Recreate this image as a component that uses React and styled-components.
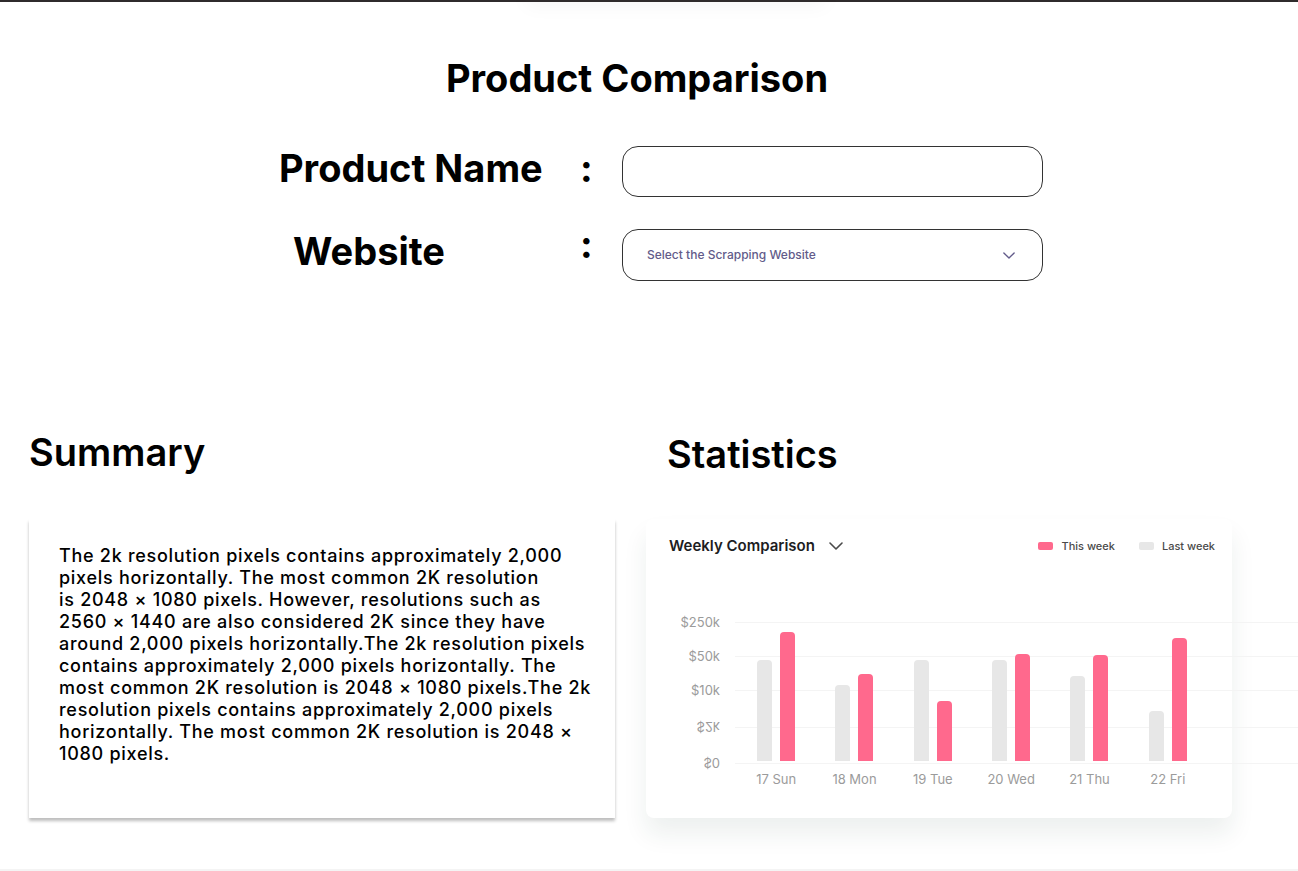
import React from "react";
import styled, { createGlobalStyle } from "styled-components";

const sans = '"Inter", "Liberation Sans", sans-serif';

const GlobalStyle = createGlobalStyle`
  *, *::before, *::after { box-sizing: border-box; }
  body { margin: 0; background: #fff; overflow-x: hidden; }
`;

const Page = styled.main`
  min-height: 100vh;
  display: flex;
  flex-direction: column;
  overflow: hidden;
  font-family: ${sans};
  color: #000;
`;

const TopBar = styled.div`
  height: 2px;
  background: #2f2b2c;
`;

const TopShade = styled.div`
  align-self: center;
  width: 300px;
  height: 20px;
  margin: -20px 0 0 53px;
  box-shadow: 0 4px 20px rgba(0, 0, 0, 0.04);
`;

const Title = styled.h1`
  margin: 53px 24px 0 0;
  font-size: 38px;
  line-height: 46px;
  font-weight: 700;
  text-align: center;
`;

const Form = styled.form`
  align-self: center;
  width: 788px;
  max-width: 100%;
  margin-top: 45px;
  padding-left: 24px;
  display: flex;
  flex-direction: column;
  gap: 32px;
`;

const Field = styled.div`
  display: grid;
  grid-template-columns: 301px 42px 1fr;
  align-items: center;
`;

const Label = styled.label`
  padding-left: ${(p) => (p.$inset ? "14px" : "0")};
  padding-bottom: 8px;
  font-size: 38px;
  line-height: 38px;
  font-weight: 700;
`;

const Colon = styled.span`
  padding-bottom: ${(p) => (p.$raised ? "22px" : "8px")};
  font-size: 38px;
  line-height: 24px;
  font-weight: 700;
`;

const TextBox = styled.input`
  width: 100%;
  height: 51px;
  padding: 0 24px;
  border: 1px solid #333;
  border-radius: 16px;
  background: #fff;
  font: 500 12px/18px ${sans};
`;

const SelectWrap = styled.div`
  display: grid;
  align-items: center;

  > * { grid-area: 1 / 1; }
  > svg { justify-self: end; margin-right: 28px; pointer-events: none; }
`;

const Select = styled.select`
  width: 100%;
  height: 52px;
  padding: 0 48px 0 24px;
  border: 1px solid #333;
  border-radius: 16px;
  background: #fff;
  appearance: none;
  color: #625b8a;
  font: 500 12px/18px ${sans};
`;

const Panels = styled.div`
  display: grid;
  grid-template-columns: 1fr 1fr;
  gap: 31px;
  margin-top: 148px;
  padding: 0 66px 0 29px;
`;

const Panel = styled.section`
  display: flex;
  flex-direction: column;
`;

const Heading = styled.h2`
  margin: 0;
  padding: ${(p) => (p.$inset ? "2px 0 0 21px" : "0 0 2px")};
  font-size: 38px;
  line-height: 46px;
  font-weight: 600;
`;

const SummaryCard = styled.div`
  flex: 1;
  margin-top: 42px;
  padding: 26px 20px 24px 30px;
  background: #fff;
  box-shadow: 0 3px 3px rgba(0, 0, 0, 0.26);
`;

const SummaryText = styled.p`
  margin: 0;
  font-size: 18px;
  line-height: 22px;
  font-weight: 500;
  letter-spacing: 0.04em;
`;

const StatsCard = styled.div`
  margin-top: 42px;
  min-height: 299px;
  padding: 16px 0 0;
  border-radius: 8px;
  background: #fff;
  box-shadow: 0 16px 24px rgba(30, 60, 50, 0.08);
`;

const CardHead = styled.div`
  display: flex;
  align-items: center;
  justify-content: space-between;
  padding: 0 17px 0 23px;
`;

const RangeButton = styled.button`
  display: flex;
  align-items: center;
  gap: 14px;
  padding: 0;
  border: 0;
  background: none;
  color: #1d1d1f;
  font: 600 15px/22px ${sans};
`;

const Legend = styled.ul`
  display: flex;
  gap: 24px;
  margin: 0;
  padding: 0;
  list-style: none;
`;

const LegendItem = styled.li`
  display: flex;
  align-items: center;
  gap: 8px;
  color: #4a4a4a;
  font-size: 11px;
  line-height: 18px;
  font-weight: 500;

  &::before {
    content: "";
    width: 15px;
    height: 8px;
    border-radius: 2px;
    background: ${(p) => p.$color};
  }
`;

const Chart = styled.div`
  display: grid;
  margin-top: 48px;

  > * { grid-area: 1 / 1; }
`;

const Axis = styled.div`
  display: grid;
  grid-template-rows: 34px 34px 34px 40px 32px;
  padding-left: 24px;
  margin-right: -66px;
`;

const AxisRow = styled.div`
  display: grid;
  grid-template-columns: 50px 1fr;
  align-items: center;
  gap: 15px;

  &::after {
    content: "";
    height: 1px;
    background: #f4f4f4;
  }
`;

const AxisLabel = styled.span`
  color: #9b9b9b;
  font-size: 13px;
  line-height: 18px;
  text-align: right;
  transform: ${(p) => (p.$mirrored ? "scaleY(-1)" : "none")};
`;

const Days = styled.div`
  display: grid;
  grid-template-columns: repeat(6, 1fr);
  padding: 0 25px 0 91px;
`;

const Day = styled.div`
  display: flex;
  flex-direction: column;
  align-items: center;
`;

const Bars = styled.div`
  display: flex;
  align-items: flex-end;
  gap: 8px;
  height: 156px;
`;

const Bar = styled.div`
  width: 15px;
  border-radius: 4px 4px 0 0;
  background: ${(p) => p.$color};
`;

const DayLabel = styled.span`
  margin-top: 9px;
  color: #9b9b9b;
  font-size: 13px;
  line-height: 18px;
`;

const BottomRule = styled.div`
  height: 2px;
  margin-top: auto;
  background: #f4f4f4;
`;

const PINK = "#ff698d";
const GREY = "#e7e7e7";

const ticks = [
  { label: "$250k" },
  { label: "$50k" },
  { label: "$10k" },
  { label: "$2k", mirrored: true },
  { label: "$0", mirrored: true },
];

const days = [
  { label: "17 Sun", last: 101, current: 129 },
  { label: "18 Mon", last: 76, current: 87 },
  { label: "19 Tue", last: 101, current: 60 },
  { label: "20 Wed", last: 101, current: 107 },
  { label: "21 Thu", last: 85, current: 106 },
  { label: "22 Fri", last: 50, current: 123 },
];

const Chevron = ({ width, height, color }) => (
  <svg width={width} height={height} viewBox="0 0 14 8" fill="none" aria-hidden="true">
    <path d="M1 1l6 6 6-6" stroke={color} strokeWidth="1.6" strokeLinecap="round" strokeLinejoin="round" />
  </svg>
);

export default function App() {
  return (
    <Page>
      <GlobalStyle />
      <TopBar />
      <TopShade />
      <Title>Product Comparison</Title>

      <Form>
        <Field>
          <Label htmlFor="product">Product Name</Label>
          <Colon>:</Colon>
          <TextBox id="product" type="text" />
        </Field>
        <Field>
          <Label htmlFor="website" $inset>Website</Label>
          <Colon $raised>:</Colon>
          <SelectWrap>
            <Select id="website" defaultValue="">
              <option value="">Select the Scrapping Website</option>
            </Select>
            <Chevron width={12} height={7} color="#625b8a" />
          </SelectWrap>
        </Field>
      </Form>

      <Panels>
        <Panel>
          <Heading>Summary</Heading>
          <SummaryCard>
            <SummaryText>
              The 2k resolution pixels contains approximately 2,000 pixels horizontally. The most
              common 2K resolution is&nbsp;2048 × 1080 pixels. However, resolutions such as
              2560&nbsp;×&nbsp;1440 are also considered 2K since they have around 2,000 pixels
              horizontally.The 2k resolution pixels contains approximately 2,000 pixels
              horizontally. The most common 2K resolution is 2048 × 1080 pixels.The 2k resolution
              pixels contains approximately 2,000 pixels horizontally. The most common 2K resolution
              is 2048 × 1080 pixels.
            </SummaryText>
          </SummaryCard>
        </Panel>

        <Panel>
          <Heading $inset>Statistics</Heading>
          <StatsCard>
            <CardHead>
              <RangeButton type="button">
                Weekly Comparison
                <Chevron width={14} height={8} color="#4a4a4a" />
              </RangeButton>
              <Legend>
                <LegendItem $color={PINK}>This week</LegendItem>
                <LegendItem $color={GREY}>Last week</LegendItem>
              </Legend>
            </CardHead>
            <Chart>
              <Axis>
                {ticks.map((t) => (
                  <AxisRow key={t.label}>
                    <AxisLabel $mirrored={t.mirrored}>{t.label}</AxisLabel>
                  </AxisRow>
                ))}
              </Axis>
              <Days>
                {days.map((d) => (
                  <Day key={d.label}>
                    <Bars>
                      <Bar $color={GREY} style={{ height: d.last }} />
                      <Bar $color={PINK} style={{ height: d.current }} />
                    </Bars>
                    <DayLabel>{d.label}</DayLabel>
                  </Day>
                ))}
              </Days>
            </Chart>
          </StatsCard>
        </Panel>
      </Panels>
      <BottomRule />
    </Page>
  );
}
